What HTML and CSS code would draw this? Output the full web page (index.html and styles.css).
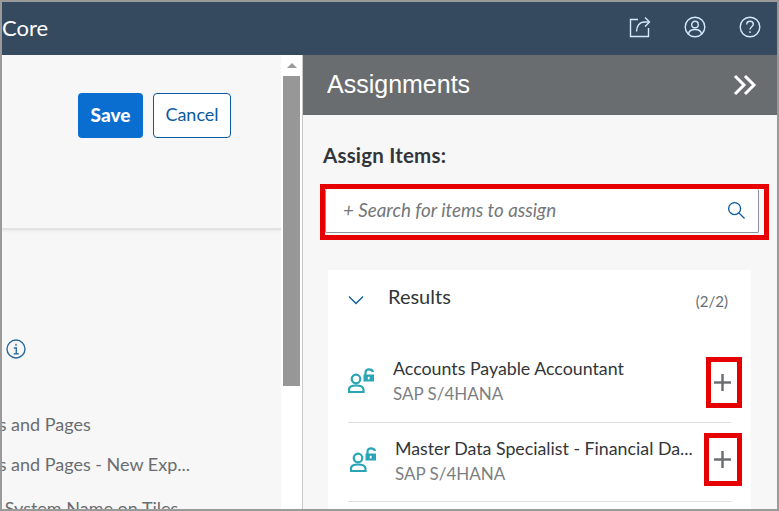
FILE: index.html
```html
<!DOCTYPE html>
<html lang="en">
<head>
  <meta charset="UTF-8">
  <meta name="viewport" content="width=device-width, initial-scale=1.0">
  <title>Assignments</title>
  <link rel="stylesheet" href="styles.css">
</head>
<body>
  <header class="shell">
    <span class="shell-title">Core</span>
    <div class="shell-icons">
      <svg class="shell-icon" viewBox="0 0 22 22"><path d="M9 3.500H1.500V20.500H19.500V12"/><path d="M7.500 15.500C7.500 10 10.500 6 15.500 6H20"/><path d="M16 1.500L20.500 6L16 10.500"/></svg>
      <svg class="shell-icon" viewBox="0 0 22 22"><circle cx="11" cy="11" r="9.800"/><circle cx="11" cy="8.500" r="3.300"/><path d="M4.500 18C5 14.500 7.500 13.500 11 13.500S17 14.500 17.500 18"/></svg>
      <svg class="shell-icon" viewBox="0 0 22 22"><circle cx="11" cy="11" r="9.800"/><path d="M7.700 8.500C7.700 6.500 9.200 5.300 11 5.300S14.300 6.500 14.300 8.300C14.300 10.600 11 10.800 11 13.500"/><path d="M11 15.300V17"/></svg>
    </div>
  </header>
  <main class="workspace">
    <section class="editor">
      <div class="editor-main">
        <div class="toolbar">
          <button class="btn btn-save">Save</button>
          <button class="btn btn-cancel">Cancel</button>
        </div>
        <div class="settings">
          <svg class="info" viewBox="0 0 20 20"><circle cx="10" cy="10" r="9"/><path d="M10 4.800V6.800"/><path d="M7.800 9H10.300V14.500"/><path d="M7.800 14.800H12.800"/></svg>
          <p class="setting setting-first">Tiles and Pages</p>
          <p class="setting">Tiles and Pages - New Exp...</p>
          <p class="setting setting-last">Use System Name on Tiles</p>
        </div>
      </div>
      <div class="scrollbar">
        <span class="scroll-up"></span>
        <span class="scroll-thumb"></span>
      </div>
    </section>
    <aside class="panel">
      <div class="panel-head">
        <h1>Assignments</h1>
        <svg class="collapse" viewBox="0 0 24 22"><path d="M2 2L11 11L2 20"/><path d="M12 2L21 11L12 20"/></svg>
      </div>
      <div class="panel-body">
        <h2>Assign Items:</h2>
        <div class="search-mark">
          <div class="search">
            <span class="search-text">+ Search for items to assign</span>
            <svg class="search-icon" viewBox="0 0 20 20"><circle cx="8" cy="8" r="6.300"/><path d="M12.500 12.500L18.500 18.500"/></svg>
          </div>
        </div>
        <div class="results">
          <div class="results-head">
            <svg class="chevron" viewBox="0 0 16 10"><path d="M1 1.500L8 8.500L15 1.500"/></svg>
            <span class="results-title">Results</span>
            <span class="results-count">(2/2)</span>
          </div>
          <div class="item">
            <svg class="role" viewBox="0 0 26 25"><circle cx="8" cy="11" r="4.300"/><path d="M1 24V21.500C1 18.500 3.500 17.500 8 17.500S15.500 18.500 15.500 21.500V24Z"/><path d="M17.500 7V4.500C17.500 2.500 19 1.300 21 1.300S24.500 2.300 25 4"/><path class="lock" d="M15.500 6.500H26V13.500H15.500Z"/><path class="keyhole" d="M20.700 8.800V11.500"/></svg>
            <div class="item-text">
              <div class="item-name">Accounts Payable Accountant</div>
              <div class="item-sub">SAP S/4HANA</div>
            </div>
            <span class="add-mark"><svg class="plus" viewBox="0 0 18 18"><path d="M9 0V18"/><path d="M0 9H18"/></svg></span>
          </div>
          <div class="item item-second">
            <svg class="role" viewBox="0 0 26 25"><circle cx="8" cy="11" r="4.300"/><path d="M1 24V21.500C1 18.500 3.500 17.500 8 17.500S15.500 18.500 15.500 21.500V24Z"/><path d="M17.500 7V4.500C17.500 2.500 19 1.300 21 1.300S24.500 2.300 25 4"/><path class="lock" d="M15.500 6.500H26V13.500H15.500Z"/><path class="keyhole" d="M20.700 8.800V11.500"/></svg>
            <div class="item-text">
              <div class="item-name">Master Data Specialist - Financial Da...</div>
              <div class="item-sub">SAP S/4HANA</div>
            </div>
            <span class="add-mark add-mark-wide"><svg class="plus" viewBox="0 0 18 18"><path d="M9 0V18"/><path d="M0 9H18"/></svg></span>
          </div>
        </div>
      </div>
    </aside>
  </main>
</body>
</html>
```

FILE: styles.css
```css
* {
  box-sizing: border-box;
}

html, body {
  height: 100%;
}

body {
  margin: 0;
  display: flex;
  flex-direction: column;
  height: 511px;
  overflow: hidden;
  border: 2px solid #9a9a9a;
  font-family: Lato, "Noto Sans", sans-serif;
  background: #f7f7f7;
}

/* top bar */
.shell {
  flex: none;
  display: flex;
  align-items: center;
  justify-content: space-between;
  height: 53px;
  padding-bottom: 3px;
  background: #354a5f;
  color: #fff;
}

.shell-title {
  font-size: 22px;
}

.shell-icons {
  display: flex;
  gap: 33px;
  margin-right: 16px;
}

.shell-icon {
  width: 22px;
  height: 22px;
  fill: none;
  stroke: #d1e8ff;
  stroke-width: 1.400;
}

.workspace {
  flex: 1;
  display: flex;
  min-height: 0;
}

/* left side */
.editor {
  flex: none;
  display: flex;
  width: 301px;
  border-right: 1px solid #c8c8c8;
}

.editor-main {
  flex: 1;
  overflow: hidden;
}

.toolbar {
  display: flex;
  justify-content: flex-end;
  gap: 10px;
  height: 175px;
  padding: 38px 50px 0 0;
  border-bottom: 2px solid #e2e2e2;
  box-shadow: 0 1px 3px rgba(0, 0, 0, .06);
}

.btn {
  height: 45px;
  border-radius: 4px;
  font-family: inherit;
  font-size: 18px;
  padding: 0 0 3px;
}

.btn-save {
  width: 65px;
  border: 0;
  background: #0a6ed1;
  color: #fff;
  font-size: 19px;
  font-weight: 900;
}

.btn-cancel {
  width: 78px;
  border: 1px solid #0a5a9e;
  background: #fff;
  color: #0a5a9e;
}

.settings {
  padding-top: 109px;
}

.info {
  display: block;
  width: 20px;
  height: 20px;
  margin-left: 4px;
  fill: none;
  stroke: #2b6a9e;
  stroke-width: 1.400;
}

.setting {
  margin: 0;
  font-size: 18px;
  line-height: 24px;
  color: #6a6d70;
  white-space: nowrap;
  margin-left: -32px;
}

.setting-first {
  margin-top: 53px;
}

.setting + .setting {
  margin-top: 16px;
}

.setting + .setting-last {
  margin-top: 20px;
}

.scrollbar {
  flex: none;
  display: flex;
  flex-direction: column;
  align-items: center;
  width: 21px;
  background: #fff;
}

.scroll-up {
  width: 0;
  height: 0;
  margin-top: 8px;
  border: 5px solid transparent;
  border-top: 0;
  border-bottom: 5px solid #9a9a9a;
}

.scroll-thumb {
  width: 17px;
  height: 310px;
  margin-top: 8px;
  background: #979797;
}

/* right side */
.panel {
  flex: 1;
  min-width: 0;
  display: flex;
  flex-direction: column;
}

.panel-head {
  flex: none;
  display: flex;
  align-items: center;
  justify-content: space-between;
  height: 60px;
  padding: 0 20px 0 24px;
  background: #6a6d70;
  color: #fff;
}

.panel-head h1 {
  margin: 0 0 2px;
  font-family: "Liberation Sans", sans-serif;
  font-size: 25px;
  font-weight: 400;
}

.collapse {
  width: 24px;
  height: 22px;
  fill: none;
  stroke: #fff;
  stroke-width: 3;
}

.panel-body {
  padding: 0 9px 0 17px;
}

.panel-body h2 {
  margin: 28px 0 0 3px;
  font-size: 20.500px;
  line-height: 24px;
  font-weight: 700;
  letter-spacing: .2px;
  color: #32363a;
}

.search-mark {
  margin-top: 17px;
  border: 5px solid #e60000;
  height: 56px;
  width: 449px;
}

.search {
  display: flex;
  align-items: center;
  justify-content: space-between;
  height: 44px;
  margin-right: 5px;
  padding: 0 12px 2px 17px;
  background: #fff;
  border: 1px solid #89919a;
  border-top: 0;
  border-radius: 2px;
}

.search-text {
  font-size: 18.800px;
  font-style: italic;
  color: #74777a;
}

.search-icon {
  width: 19px;
  height: 19px;
  margin-top: 2px;
  fill: none;
  stroke: #0a5a9e;
  stroke-width: 1.400;
}

.results {
  margin: 30px 0 0 8px;
  width: 423px;
  height: 260px;
  padding: 0 20px;
  background: #fff;
}

.results-head {
  display: flex;
  align-items: center;
  height: 55px;
}

.chevron {
  width: 16px;
  height: 10px;
  margin-top: 4px;
  fill: none;
  stroke: #0a5a9e;
  stroke-width: 1.300;
}

.results-title {
  margin: -4px 0 0 24px;
  font-size: 20px;
  color: #32363a;
}

.results-count {
  margin: 6px 3px 0 auto;
  font-size: 15px;
  color: #6a6d70;
}

.item {
  display: flex;
  align-items: center;
  height: 79px;
  margin-top: 19px;
  padding-bottom: 2px;
  border-bottom: 1px solid #dedede;
}

.item-second {
  margin-top: 0;
  padding-left: 2px;
}

.item-second .item-text {
  margin-bottom: 0;
}

.role {
  flex: none;
  width: 26px;
  height: 25px;
  margin-bottom: 3px;
  fill: none;
  stroke: #2aa5b5;
  stroke-width: 2.200;
}

.role .lock {
  fill: #2aa5b5;
  stroke: none;
}

.role .keyhole {
  stroke: #fff;
  stroke-width: 1.800;
}

.item-text {
  flex: 1;
  min-width: 0;
  margin: 0 0 2px 19px;
  white-space: nowrap;
}

.item-name {
  font-size: 17.800px;
  line-height: 24px;
  color: #32363a;
}

.item-sub {
  margin-top: 2px;
  font-size: 17px;
  line-height: 24px;
  color: #7c7f82;
}

.add-mark {
  flex: none;
  display: flex;
  align-items: center;
  justify-content: center;
  width: 36px;
  height: 51px;
  margin-right: -11px;
  padding-right: 4px;
  border: 5px solid #e60000;
}

.add-mark-wide {
  width: 38px;
  height: 53px;
  margin-bottom: 4px;
  padding-right: 2px;
}

.plus {
  width: 17px;
  height: 17px;
  fill: none;
  stroke: #6a6d70;
  stroke-width: 2.600;
}
```
